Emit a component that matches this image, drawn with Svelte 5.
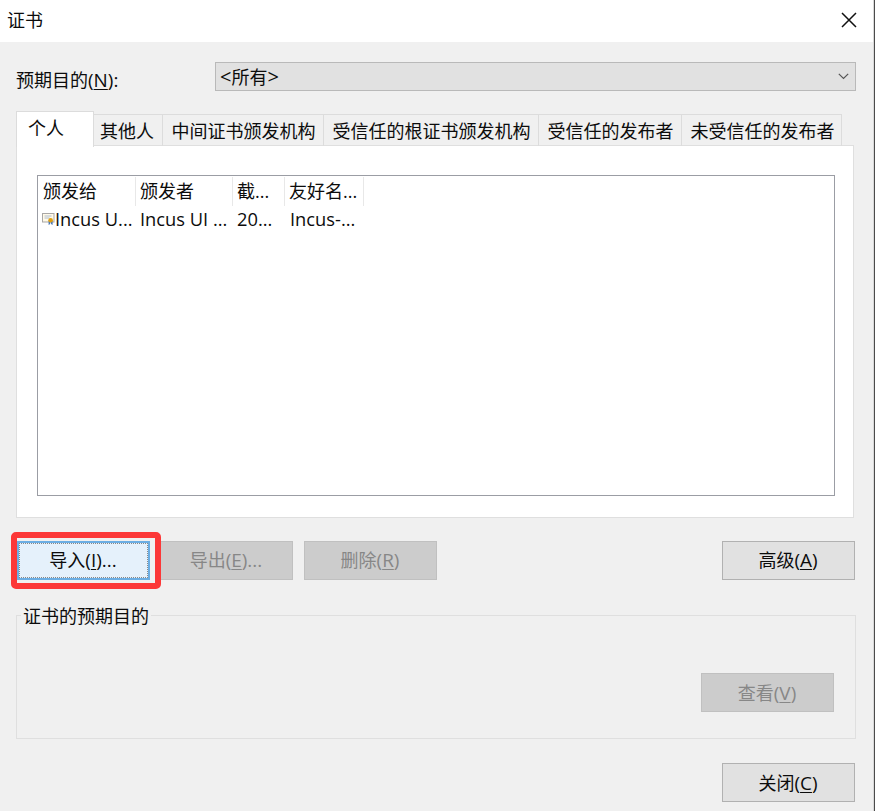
<script>
  const tabs = [
    { label: '个人', width: 78, active: true },
    { label: '其他人', width: 69 },
    { label: '中间证书颁发机构', width: 161 },
    { label: '受信任的根证书颁发机构', width: 215 },
    { label: '受信任的发布者', width: 143 },
    { label: '未受信任的发布者', width: 160 }
  ];
  const columns = [
    { head: '颁发给', value: 'Incus U...', width: 98, icon: true },
    { head: '颁发者', value: 'Incus UI ...', width: 97 },
    { head: '截...', value: '20...', width: 52 },
    { head: '友好名...', value: 'Incus-...', width: 79 }
  ];
</script>

{#snippet button(text, key, tail, kind)}
  <button class="btn {kind}" disabled={kind === 'off'}><span>{text}<span class="key">(<u>{key}</u>){tail}</span></span></button>
{/snippet}

<div class="window">
  <header>
    <span>证书</span>
    <svg width="16" height="16" viewBox="0 0 16 16"><path d="M1 1 15 15M15 1 1 15" stroke="#111" stroke-width="1.5" fill="none" /></svg>
  </header>

  <div class="purpose">
    <label for="purpose">预期目的<span class="key">(<u>N</u>):</span></label>
    <div class="select" id="purpose">
      <span><span class="angle">&lt;</span>所有<span class="angle">&gt;</span></span>
      <svg width="11" height="7" viewBox="0 0 11 7"><path d="M.8.8 5.5 5.5 10.2.8" stroke="#555" stroke-width="1.2" fill="none" /></svg>
    </div>
  </div>

  <nav>
    {#each tabs as tab}
      <div class="tab" class:active={tab.active} style:width="{tab.width}px">{tab.label}</div>
    {/each}
  </nav>

  <section class="panel">
    <div class="list">
      {#each columns as col}
        <div class="col" style:width="{col.width}px">
          <div class="head">{col.head}</div>
          <div class="cell" class:first={col.icon}>
            {#if col.icon}
              <svg width="13" height="12" viewBox="0 0 13 12">
                <rect x=".5" y=".5" width="11.5" height="8.5" fill="#fff9e8" stroke="#a9a7a5" />
                <path d="M2.5 3h7M2.5 5h5" stroke="#a5b4cc" stroke-width=".9" />
                <path d="M6.6 8v4l1.6-.9V8zM9 8v3.1l1.6.9V8z" fill="#4878b8" />
                <circle cx="8.6" cy="7.2" r="2.3" fill="#e0a010" />
              </svg>
            {/if}
            <span>{col.value}</span>
          </div>
        </div>
      {/each}
    </div>
  </section>

  <div class="actions">
    <div class="import">
      {@render button('导入', 'I', '...', 'focus')}
      <div class="highlight"></div>
    </div>
    {@render button('导出', 'E', '...', 'off')}
    {@render button('删除', 'R', '', 'off')}
    <div class="spacer"></div>
    {@render button('高级', 'A', '', '')}
  </div>

  <div class="group">
    <span class="legend">证书的预期目的</span>
    {@render button('查看', 'V', '', 'off')}
  </div>

  <footer>{@render button('关闭', 'C', '', '')}</footer>
</div>

<style>
  :global(body) { background: #f0f0f0; overflow: hidden; }
  .window {
    box-sizing: border-box; width: 875px; height: 811px;
    background: #f0f0f0; border-right: 1px solid #4b4b4b;
    box-shadow: inset -1px 0 #d8d8d8;
    font: 18px/24px "Open Sans", "Noto Sans CJK SC", sans-serif; color: #0c0c0c;
    white-space: nowrap;
  }
  svg { display: block; flex: none; }
  u { text-decoration-thickness: 1px; text-underline-offset: 1.5px; }
  .key { font-size: 18.9px; line-height: 1; }
  .angle { font-size: 20px; line-height: 1; }
  header {
    height: 42px; margin-right: 1px; padding: 0 16px 2px 7px; box-sizing: border-box;
    background: #fff; display: flex; align-items: center; justify-content: space-between;
  }
  .purpose { display: flex; padding: 20px 18px 0 16px; height: 69px; box-sizing: border-box; }
  label { width: 199px; padding-top: 6px; }
  .select {
    flex: 1; height: 29px; box-sizing: border-box; border: 1px solid #b9b9b9; background: #e1e1e1;
    display: flex; align-items: center; justify-content: space-between; padding: 0 6px 0 4px;
  }
  nav { display: flex; align-items: flex-end; height: 35px; padding-left: 16px; }
  .tab {
    box-sizing: border-box; height: 32px; border: 1px solid #dcdcdc; border-width: 1px 1px 0 0;
    display: flex; justify-content: center; align-items: center; padding: 1px 0 0 1px;
  }
  .active + .tab { padding: 1px 2px 0 0; }
  .tab:last-child { padding-left: 2px; }
  .tab.active {
    position: relative; height: 36px; margin-bottom: -1px; background: #fff;
    border-left-width: 1px; justify-content: flex-start; align-items: flex-start; padding: 4px 0 0 11px;
  }
  .panel {
    box-sizing: border-box; margin: -1px 20px 0 16px; height: 373px;
    background: #fff; border: 1px solid #dfdfdf; padding: 29px 18px 21px 20px;
  }
  .list { height: 321px; box-sizing: border-box; border: 1px solid #9b9da4; display: flex; }
  .col { box-sizing: border-box; }
  .head { height: 29px; margin-top: 1px; border-right: 1px solid #e8e8e8; box-sizing: border-box; padding: 2px 0 0 4px; }
  .col:first-child .head { padding-left: 5px; }
  .cell { display: flex; align-items: center; padding: 1px 0 0 4px; font-size: 18.3px; }
  .col:last-child .cell { padding-left: 5px; }
  .actions { display: flex; padding: 23px 19px 0 17px; height: 97px; box-sizing: border-box; }
  .spacer { flex: 1; }
  .btn {
    box-sizing: border-box; width: 133px; height: 39px; padding: 0 1px 0 0; margin: 0;
    border: 1px solid #b1b1b1; background: #e1e1e1; color: inherit; font: inherit;
  }
  .btn.off { background: #ccc; border-color: #c0c0c0; color: #878787; }
  .btn.focus { border: 2px solid #6caee3; background: #e5f1fb; outline: 1px dotted #888; outline-offset: -3px; }
  .actions .btn { padding-bottom: 1px; }
  .actions > .btn.off { margin-right: 11px; }
  .import { position: relative; margin-right: 10px; }
  .highlight {
    position: absolute; z-index: 1; left: -6px; top: -9px; width: 150px; height: 57px;
    box-sizing: border-box; border: 6px solid #fc3737; border-radius: 5px; pointer-events: none;
  }
  .group {
    position: relative; box-sizing: border-box; margin: 0 18px 0 16px; height: 124px;
    border: 1px solid #dfdfdf; display: flex; justify-content: flex-end; padding: 57px 21px 0 0;
  }
  .legend { position: absolute; left: 4px; top: -12px; padding: 0 2px; background: #f0f0f0; }
  footer { display: flex; justify-content: flex-end; padding: 24px 19px 0 0; }
</style>
